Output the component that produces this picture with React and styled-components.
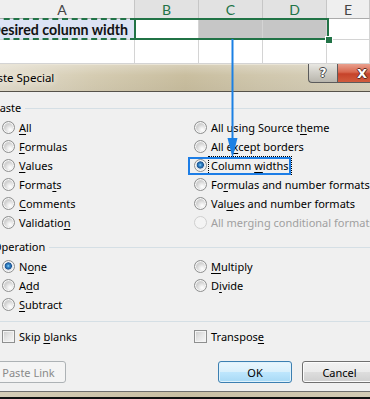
import React from 'react';
import styled, { createGlobalStyle } from 'styled-components';

const GlobalStyle = createGlobalStyle`
  html, body {
    margin: 0;
    padding: 0;
    background: #ffffff;
    overflow: hidden;
  }
`;

const Screen = styled.div`
  position: relative;
  width: 370px;
  height: 399px;
  overflow: hidden;
  background: #ffffff;
`;

// --- spreadsheet strip ---

const Sheet = styled.div`
  position: relative;
  height: 64px;
  overflow: hidden;
  font-family: Lato, "Liberation Sans", sans-serif;
`;

const Row = styled.div`
  display: grid;
  grid-template-columns: 135px 64px 64px 64px 1fr;
  height: ${p => p.$h}px;
`;

const HeaderCell = styled.div`
  display: flex;
  align-items: center;
  justify-content: center;
  box-sizing: border-box;
  font-size: 14px;
  padding: 1px ${p => p.$shift || 0}px 0 0;
  color: ${p => (p.$sel ? '#217346' : '#444444')};
  background: ${p => (p.$sel ? '#e2e2e2' : '#efefef')};
  border-right: 1px solid #c6c6c6;
  border-bottom: 1px solid #ababab;
`;

const Cell = styled.div`
  box-sizing: border-box;
  border-right: 1px solid #d4d4d4;
  border-bottom: 1px solid #d4d4d4;
  background: ${p => p.$fill || '#ffffff'};
`;

const SourceCell = styled.div`
  position: relative;
  box-sizing: border-box;
  background: #dce3f4;
  border-bottom: 1px solid #d4d4d4;
  display: flex;
  align-items: center;
  font-weight: 700;
  font-size: 14.2px;
  color: #111111;
  white-space: nowrap;
  text-indent: -10px;

  &::after {
    content: '';
    position: absolute;
    left: -6px;
    right: -1px;
    top: -1px;
    bottom: -1px;
    border: 2px dashed #217346;
  }
`;

const Selection = styled.div`
  position: absolute;
  left: 134px;
  top: 18px;
  width: 195px;
  height: 22px;
  box-sizing: border-box;
  border: 2px solid #217346;
`;

const FillHandle = styled.div`
  position: absolute;
  left: 325px;
  top: 36px;
  width: 6px;
  height: 6px;
  background: #217346;
  border: 1px solid #ffffff;
`;

// --- dialog ---

const Dialog = styled.div`
  font-family: "Noto Sans", "Open Sans", sans-serif;
  font-size: 11px;
  color: #000000;
`;

const TitleBar = styled.div`
  position: relative;
  height: 26px;
  border-top: 1px solid #e9e4d6;
  border-bottom: 1px solid #56524a;
  background:
    linear-gradient(180deg, rgba(255,255,255,0.25) 0%, rgba(255,255,255,0) 40%, rgba(0,0,0,0.03) 100%),
    linear-gradient(90deg, #e3ddcd 0%, #d5ccb2 25%, #c9be9f 50%, #d0c7ad 70%, #d8d1bc 100%);
  display: flex;
  justify-content: space-between;
  align-items: flex-start;
`;

const Title = styled.span`
  margin-left: -16px;
  margin-top: 5px;
  font-size: 11.5px;
  white-space: nowrap;
  text-shadow: 0 0 6px #f1ece0, 0 0 8px #f1ece0;
`;

const Caption = styled.div`
  display: flex;
  margin-top: -1px;
`;

const CaptionButton = styled.div`
  height: 19px;
  box-sizing: border-box;
  display: flex;
  align-items: center;
  justify-content: center;
  font-family: "DejaVu Sans", sans-serif;
  font-weight: 700;
  color: #ffffff;
  border: 1px solid #5b5b5b;
  border-top: none;
`;

const HelpButton = styled(CaptionButton)`
  width: 29px;
  border-radius: 0 0 0 4px;
  border-right: none;
  font-size: 12px;
  background: linear-gradient(180deg, #e8e7e2 0%, #cfcdc6 50%, #b9b6ad 100%);
  text-shadow: -1px 0 #4a4a4a, 1px 0 #4a4a4a, 0 -1px #4a4a4a, 0 1px #4a4a4a;
`;

const CloseButton = styled(CaptionButton)`
  width: 33px;
  font-size: 13px;
  justify-content: flex-start;
  padding-left: 19px;
  border-right: none;
  background: linear-gradient(180deg, #e9a08e 0%, #d8684f 45%, #c6432a 55%, #d15c3d 100%);
  text-shadow: -1px 0 #5d2a1f, 1px 0 #5d2a1f, 0 -1px #5d2a1f, 0 1px #5d2a1f;
`;

const Body = styled.div`
  background: #f0f0f0;
  padding: 5px 0 0 2px;
  height: 300px;
  box-sizing: border-box;
  border-bottom: 1px solid #6f6f6f;
  display: flex;
  flex-direction: column;
`;

const GroupHead = styled.div`
  display: flex;
  align-items: center;
  height: 21px;
  margin-left: -9px;
  margin-top: ${p => p.$top || 0}px;
  gap: 4px;

  &::after {
    content: '';
    flex: 1;
    height: 1px;
    background: #d5dfe5;
    margin-top: 1px;
  }
`;

const OptionGrid = styled.div`
  display: grid;
  grid-template-columns: 192px 1fr;
  grid-template-rows: repeat(${p => p.$rows}, 19px);
  grid-auto-flow: column;
`;

const Option = styled.label`
  position: relative;
  display: flex;
  align-items: center;
  gap: 4px;
  white-space: nowrap;
  color: ${p => (p.$disabled ? '#a0a0a0' : '#000000')};

  ${p =>
    p.$marked &&
    `
    &::before {
      content: '';
      position: absolute;
      left: -6px;
      top: 1px;
      width: 103px;
      height: 18px;
      box-sizing: border-box;
      border: 2px solid #1c7de6;
    }
  `}
`;

const Radio = styled.span`
  flex: none;
  width: 13px;
  height: 13px;
  box-sizing: border-box;
  border-radius: 50%;
  border: 1px solid ${p => (p.$disabled ? '#cfcfcf' : '#8e8f8f')};
  box-shadow: inset 0 0 0 1px ${p => (p.$disabled ? '#f4f4f4' : '#f7f7f7')};
  background: ${p =>
    p.$checked
      ? 'radial-gradient(circle at 48% 45%, #9fdcff 0, #3a8fd0 1.2px, #1d5595 3.3px, #d9dfe6 3.9px, #f3f3f3 6px)'
      : p.$disabled
      ? '#f4f4f4'
      : 'radial-gradient(circle at 65% 70%, #ffffff 0, #f1f1f1 2px, #d2d2d2 5.5px)'};
`;

const Check = styled.span`
  flex: none;
  width: 13px;
  height: 13px;
  box-sizing: border-box;
  border: 1px solid #8e8f8f;
  box-shadow: inset 0 0 0 1px #f4f4f4;
  background: linear-gradient(135deg, #cbcbcb 0%, #e6e6e6 50%, #f8f8f8 100%);
`;

const Text = styled.span`
  outline: ${p => (p.$focus ? '1px dotted #000000' : 'none')};
  outline-offset: 1px;
  padding: 0 1px;
  margin-left: -1px;
`;

const Key = styled.u`
  text-decoration: underline;
  text-underline-offset: 2px;
`;

const Separator = styled.div`
  height: 1px;
  margin: 7px 0 5px -2px;
  background: #d5dfe5;
`;

const CheckRow = styled.div`
  display: grid;
  grid-template-columns: 192px 1fr;
  height: 19px;
`;

const Buttons = styled.div`
  display: flex;
  align-items: center;
  margin: 15px 0 0 -11px;
  height: 22px;
`;

const Button = styled.div`
  width: 75px;
  height: 22px;
  box-sizing: border-box;
  border-radius: 3px;
  display: flex;
  align-items: center;
  justify-content: center;
  flex: none;
  border: 1px solid #707070;
  background: linear-gradient(180deg, #f2f2f2 0%, #ebebeb 48%, #dddddd 52%, #cfcfcf 100%);
  box-shadow: inset 0 0 0 1px #fcfcfc;
`;

const DisabledButton = styled(Button)`
  color: #8a8a8a;
  border-color: #adb2b5;
  background: #f4f4f4;
  box-shadow: none;
`;

const DefaultButton = styled(Button)`
  width: 74px;
  margin-left: auto;
  border-color: #3c7fb1;
  background: linear-gradient(180deg, #eaf6fd 0%, #d9f0fc 48%, #bee6fd 52%, #a7d9f5 100%);
  box-shadow: inset 0 0 0 1px #dff2fc;
`;

const CancelButton = styled(Button)`
  margin: 0 -7px 0 10px;
`;

const Frame = styled.div`
  height: 5px;
  background: linear-gradient(90deg, #d4ccb6 0%, #c9bfa3 50%, #d3cbb5 100%);
  border-bottom: 2px solid #111111;
`;

const Arrow = styled.svg`
  position: absolute;
  left: 226px;
  top: 39px;
  overflow: visible;
`;

const label = (text, k) =>
  k < 0 ? text : (
    <>
      {text.slice(0, k)}
      <Key>{text[k]}</Key>
      {text.slice(k + 1)}
    </>
  );

const pasteOptions = [
  { text: 'All', k: 0 },
  { text: 'Formulas', k: 0 },
  { text: 'Values', k: 0 },
  { text: 'Formats', k: 5 },
  { text: 'Comments', k: 0 },
  { text: 'Validation', k: 9 },
  { text: 'All using Source theme', k: 18 },
  { text: 'All except borders', k: 5 },
  { text: 'Column widths', k: 7, checked: true, marked: true },
  { text: 'Formulas and number formats', k: 2 },
  { text: 'Values and number formats', k: 3 },
  { text: 'All merging conditional formats', k: -1, disabled: true },
];

const operationOptions = [
  { text: 'None', k: 1, checked: true },
  { text: 'Add', k: 1 },
  { text: 'Subtract', k: 0 },
  { text: 'Multiply', k: 0 },
  { text: 'Divide', k: 1 },
];

const OptionItem = ({ text, k, checked, disabled, marked }) => (
  <Option $disabled={disabled} $marked={marked}>
    <Radio $checked={checked} $disabled={disabled} />
    <Text $focus={marked}>{label(text, k)}</Text>
  </Option>
);

export default function App() {
  return (
    <Screen>
      <GlobalStyle />
      <Sheet>
        <Row $h={19}>
          <HeaderCell $shift={10}>A</HeaderCell>
          <HeaderCell $sel>B</HeaderCell>
          <HeaderCell $sel>C</HeaderCell>
          <HeaderCell $sel>D</HeaderCell>
          <HeaderCell>E</HeaderCell>
        </Row>
        <Row $h={21}>
          <SourceCell>Desired column width</SourceCell>
          <Cell />
          <Cell $fill="#c6c6c6" />
          <Cell $fill="#c6c6c6" />
          <Cell />
        </Row>
        <Row $h={24}>
          <Cell />
          <Cell />
          <Cell />
          <Cell />
          <Cell />
        </Row>
        <Selection />
        <FillHandle />
      </Sheet>

      <Dialog>
        <TitleBar>
          <Title>Paste Special</Title>
          <Caption>
            <HelpButton>?</HelpButton>
            <CloseButton>X</CloseButton>
          </Caption>
        </TitleBar>

        <Body>
          <GroupHead>Paste</GroupHead>
          <OptionGrid $rows={6}>
            {pasteOptions.map(o => (
              <OptionItem key={o.text} {...o} />
            ))}
          </OptionGrid>

          <GroupHead $top={4}>Operation</GroupHead>
          <OptionGrid $rows={3}>
            {operationOptions.map(o => (
              <OptionItem key={o.text} {...o} />
            ))}
          </OptionGrid>

          <Separator />

          <CheckRow>
            <Option>
              <Check />
              <Text>{label('Skip blanks', 5)}</Text>
            </Option>
            <Option>
              <Check />
              <Text>{label('Transpose', 8)}</Text>
            </Option>
          </CheckRow>

          <Buttons>
            <DisabledButton>Paste Link</DisabledButton>
            <DefaultButton>OK</DefaultButton>
            <CancelButton>Cancel</CancelButton>
          </Buttons>
        </Body>
        <Frame />
      </Dialog>

      <Arrow width="14" height="120" viewBox="0 0 14 120">
        <line x1="6.5" y1="0" x2="6.5" y2="104" stroke="#1b80e4" strokeWidth="2" />
        <polygon points="1.5,99 11.5,99 6.5,119" fill="#1b80e4" />
      </Arrow>
    </Screen>
  );
}
